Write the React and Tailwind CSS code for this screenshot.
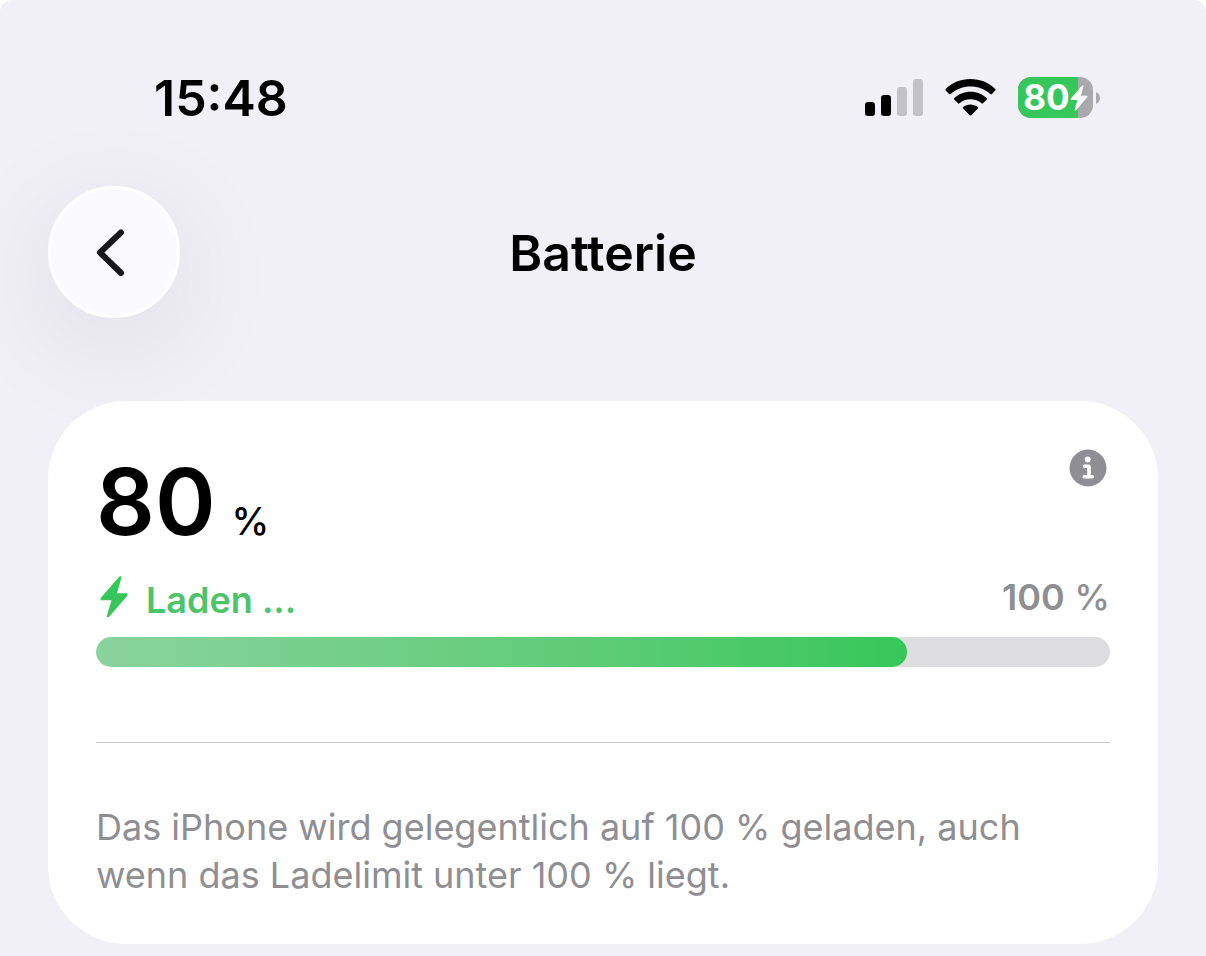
import React from "react";

const battery = { level: 80, max: 100, charging: true };

const SignalIcon = () => (
	<svg className="w-[58px] h-[37px]" viewBox="0 0 58 37" aria-hidden="true">
		<rect x="0" y="23" width="10" height="14" rx="3.2" fill="#000" />
		<rect x="16" y="16" width="10" height="21" rx="3.2" fill="#000" />
		<rect x="32" y="8" width="10" height="29" rx="3.2" fill="#c2c1c7" />
		<rect x="48" y="0" width="10" height="37" rx="3.2" fill="#c2c1c7" />
	</svg>
);

const WifiIcon = () => (
	<svg className="w-[51px] h-[37px]" viewBox="0 0 51 37" aria-hidden="true">
		<path d="M25.500 0C35.200 0 44 3.700 50.300 9.900Q51 10.700 50.300 11.500L46.900 14.900Q46.100 15.600 45.300 14.900C40 9.900 33 7.400 25.500 7.400S11 9.900 5.700 14.900Q4.900 15.600 4.100 14.900L0.700 11.500Q0 10.700 0.700 9.900C7 3.700 15.800 0 25.500 0Z" />
		<path d="M25.500 12.800C32 12.800 37.500 15.200 41.700 19.100Q42.400 19.900 41.600 20.700L38 24.300Q37.300 25 36.500 24.300C33.500 21.700 29.700 20.300 25.500 20.300S17.500 21.700 14.500 24.300Q13.700 25 13 24.300L9.400 20.700Q8.600 19.900 9.300 19.100C13.500 15.200 19 12.800 25.500 12.800Z" />
		<path d="M25.500 25.500C28.300 25.500 30.800 26.400 32.800 28Q33.600 28.800 32.800 29.600L26.300 36.200Q25.500 37 24.700 36.200L18.200 29.600Q17.400 28.800 18.200 28C20.200 26.400 22.700 25.500 25.500 25.500Z" />
	</svg>
);

const BoltIcon = ({ className }) => (
	<svg className={className} viewBox="0 0 28 42" fill="currentColor" aria-hidden="true">
		<path d="M19.200 0.800C20.300 -0.300 21.800 0.600 21.300 2L17 17.300H26.200C27.600 17.300 28.100 18.700 27.100 19.900L9.400 40.600C8.300 41.900 6.400 41 7 39.400L11.500 24.200H1.800C0.500 24.200 0 22.800 0.900 21.700Z" />
	</svg>
);

const InfoIcon = () => (
	<svg className="w-[38px] h-[38px]" viewBox="0 0 38 38" aria-hidden="true">
		<circle cx="19" cy="19" r="18.500" fill="#8e8e93" />
		<circle cx="18.700" cy="10.500" r="2.900" fill="#fff" />
		<path
			d="M15.500 17.200H20V27.700M15.200 27.700H23.300"
			fill="none"
			stroke="#fff"
			strokeWidth="3.600"
			strokeLinecap="round"
			strokeLinejoin="round"
		/>
	</svg>
);

const StatusBar = () => (
	<div className="flex items-start justify-between pl-[154px] pr-[106px] pt-[68px]">
		<time className="text-[50px] leading-[60px] font-semibold">15:48</time>
		<div className="flex items-center gap-[22px] pt-[9px]">
			<SignalIcon />
			<WifiIcon />
			<div className="flex items-center gap-[3px]">
				<div className="relative w-[75px] h-[41px] rounded-[13px] overflow-hidden bg-[#a9a8ad]">
					<div
						className="absolute inset-y-0 left-0 bg-[#35c759]"
						style={{ width: `${battery.level}%` }}
					/>
					<div className="relative h-full flex items-center justify-center text-white">
						<span className="text-[35px] font-bold">{battery.level}</span>
						{battery.charging && <BoltIcon className="w-[18px] h-[26px]" />}
					</div>
				</div>
				<svg className="w-1 h-3" viewBox="0 0 4 12" aria-hidden="true">
					<path d="M0 0C5.300 2.500 5.300 9.500 0 12Z" fill="#a9a8ad" />
				</svg>
			</div>
		</div>
	</div>
);

const Header = () => (
	<header className="relative z-10 grid grid-cols-[132px_1fr_132px] items-center px-12 pt-[58px]">
		<button
			type="button"
			aria-label="Zurück"
			className="w-[132px] h-[132px] rounded-full border-[3px] border-white bg-[#fbfaff] flex items-center justify-center shadow-[0_24px_120px_rgba(0,0,0,0.09)]"
		>
			<svg className="w-[60px] h-[60px]" viewBox="0 0 60 60" aria-hidden="true">
				<path
					d="M37 10.500L16 30.500L37 51"
					fill="none"
					stroke="#18181c"
					strokeWidth="6"
					strokeLinecap="round"
					strokeLinejoin="round"
				/>
			</svg>
		</button>
		<h1 className="pt-0.5 text-center text-[50px] leading-[60px] font-semibold">Batterie</h1>
	</header>
);

const BatteryCard = () => (
	<section className="mx-12 mt-[83px] mb-3 rounded-[78px] bg-white px-12 pt-12 pb-[45px]">
		<div className="flex items-start justify-between">
			<p className="flex items-baseline gap-4 pt-1">
				<span className="text-[92px] leading-[98px] font-semibold">{battery.level}</span>
				<span className="text-[38px] font-medium">%</span>
			</p>
			<button type="button" aria-label="Info" className="mr-[3px]">
				<InfoIcon />
			</button>
		</div>
		<div className="flex items-start justify-between pt-[21px] text-[36px] leading-[48px]">
			<p className="flex items-start gap-[18px] pl-1 font-semibold text-[#4cc469]">
				<BoltIcon className="mt-1 w-7 h-[42px] text-[#35c759]" />
				<span className="pt-1">Laden ...</span>
			</p>
			<p className="pt-px font-medium text-[#8e8e93]">
				<span className="font-semibold">{battery.max}</span> %
			</p>
		</div>
		<div
			role="progressbar"
			aria-label="Batterie"
			aria-valuenow={battery.level}
			aria-valuemax={battery.max}
			className="mt-[13px] h-[30px] rounded-full overflow-hidden bg-[#dddddf]"
		>
			<div
				className="h-full rounded-full bg-linear-to-r from-[#89d39d] to-[#35c759]"
				style={{ width: `${(battery.level / battery.max) * 100}%` }}
			/>
		</div>
		<hr className="mt-[75px] border-[#c6c6c8]" />
		<p className="mt-[60px] text-[36px] leading-[48px] text-[#8e8e93]">
			Das iPhone wird gelegentlich auf 100 % geladen, auch wenn das Ladelimit unter 100 % liegt.
		</p>
	</section>
);

const App = () => {
	return (
		<div className="bg-white">
			<main className="flow-root min-h-screen rounded-t-xl bg-[#f1f0f6] font-['Inter',sans-serif] text-black">
				<StatusBar />
				<Header />
				<BatteryCard />
			</main>
		</div>
	);
};

export default App;
